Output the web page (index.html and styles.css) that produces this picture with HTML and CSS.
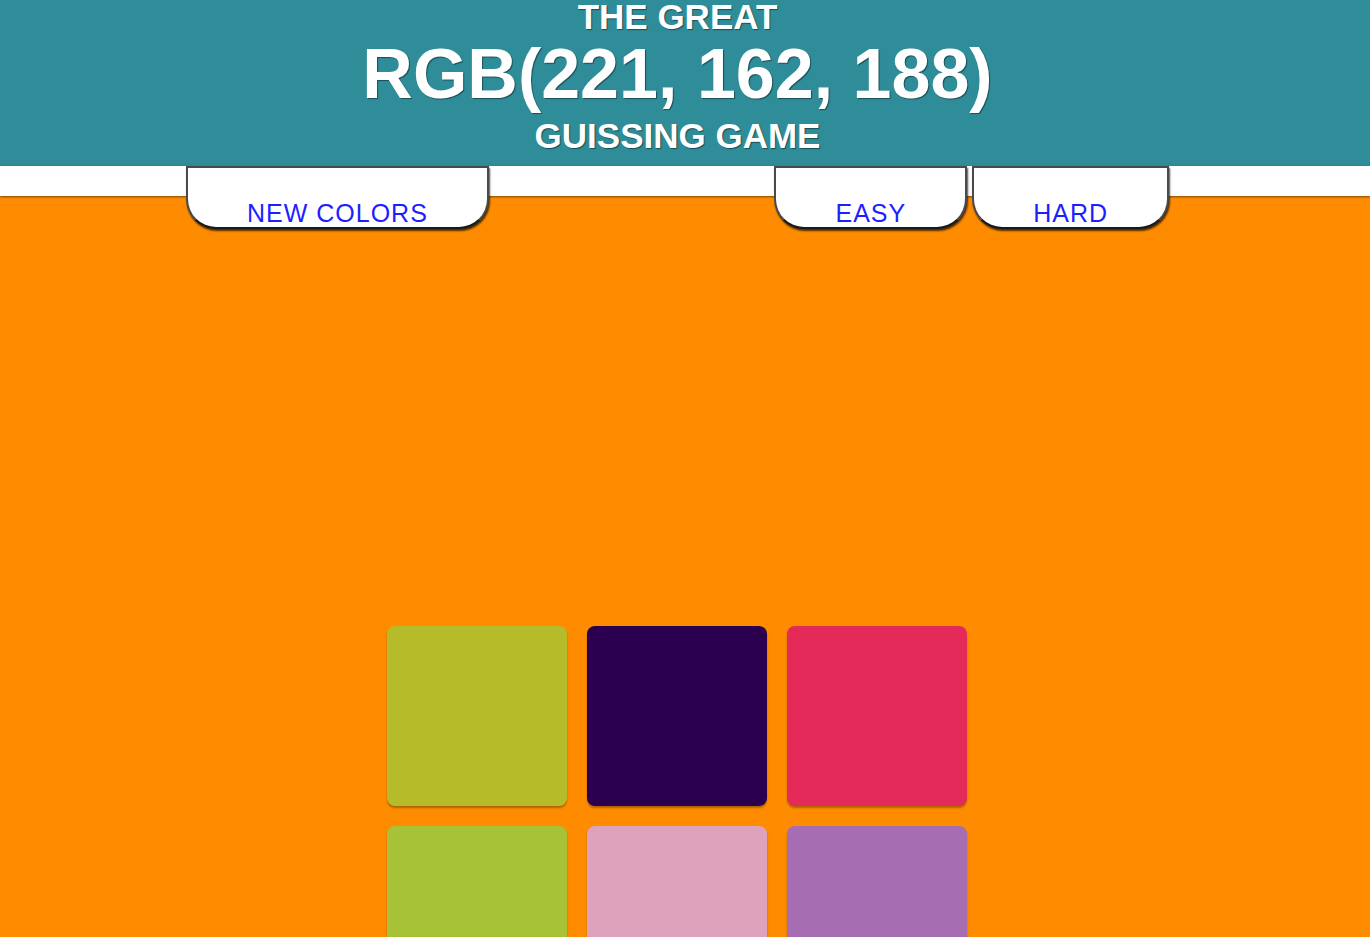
FILE: index.html
```html
<!DOCTYPE html>
<html lang="en">
<head>
<meta charset="utf-8">
<title>The Great RGB Guessing Game</title>
<link rel="stylesheet" href="styles.css">
</head>
<body>
<header class="header">
  <div class="title-small">THE GREAT</div>
  <div class="title-rgb">RGB(221, 162, 188)</div>
  <div class="title-small title-bottom">GUISSING GAME</div>
</header>
<nav class="nav">
  <button class="tab">NEW COLORS</button>
  <button class="tab tab-easy">EASY</button>
  <button class="tab tab-hard">HARD</button>
</nav>
<main class="board">
  <div class="square sq1"></div>
  <div class="square sq2"></div>
  <div class="square sq3"></div>
  <div class="square sq4"></div>
  <div class="square sq5"></div>
  <div class="square sq6"></div>
</main>
</body>
</html>
```
FILE: styles.css
```css
html, body {
  margin: 0;
  padding: 0;
}
body {
  background: #ff8c00;
  font-family: "Liberation Sans", Arial, sans-serif;
}
.header {
  background: #2e8d99;
  color: #fff;
  text-align: center;
  font-weight: bold;
  padding: 0 15px 10px 0;
  height: 156px;
  text-shadow: 1px 1px 1px rgba(0, 0, 0, 0.45);
}
.title-small {
  font-size: 35px;
  line-height: 33px;
}
.title-bottom {
  line-height: 41px;
}
.title-rgb {
  font-size: 70px;
  line-height: 82px;
}
.nav {
  position: relative;
  z-index: 2;
  display: flex;
  align-items: flex-start;
  height: 30px;
  background: #fff;
  box-shadow: 0 1px 2px rgba(0, 0, 0, 0.5);
  padding: 0 201px 0 186px;
}
.tab {
  flex: none;
  height: 63px;
  margin: 0;
  padding: 30px 59px 0;
  background: #fff;
  border: 2px solid #4a4a4a;
  border-bottom-color: #1a1a1a;
  border-radius: 0 0 30px 30px;
  box-shadow: 1px 2px 2px rgba(0, 0, 0, 0.7);
  font-family: "Liberation Sans", Arial, sans-serif;
  font-size: 25px;
  line-height: 28px;
  letter-spacing: 1px;
  color: #1e1eff;
  text-align: center;
  box-sizing: border-box;
}
.tab-easy {
  margin-left: auto;
}
.tab-hard {
  margin-left: 5px;
}
.board {
  display: grid;
  grid-template-columns: repeat(3, 180px);
  gap: 20px;
  width: 580px;
  margin-left: calc(50% - 298px);
  padding-top: 430px;
}
.square {
  height: 180px;
  border-radius: 8px;
  box-shadow: 0 2px 2px rgba(0, 0, 0, 0.3);
}
.sq1 { background: #b6bb29; }
.sq2 { background: #2b004e; }
.sq3 { background: #e42a58; }
.sq4 { background: #a8c238; }
.sq5 { background: #dda2bc; }
.sq6 { background: #a76db3; }
```
